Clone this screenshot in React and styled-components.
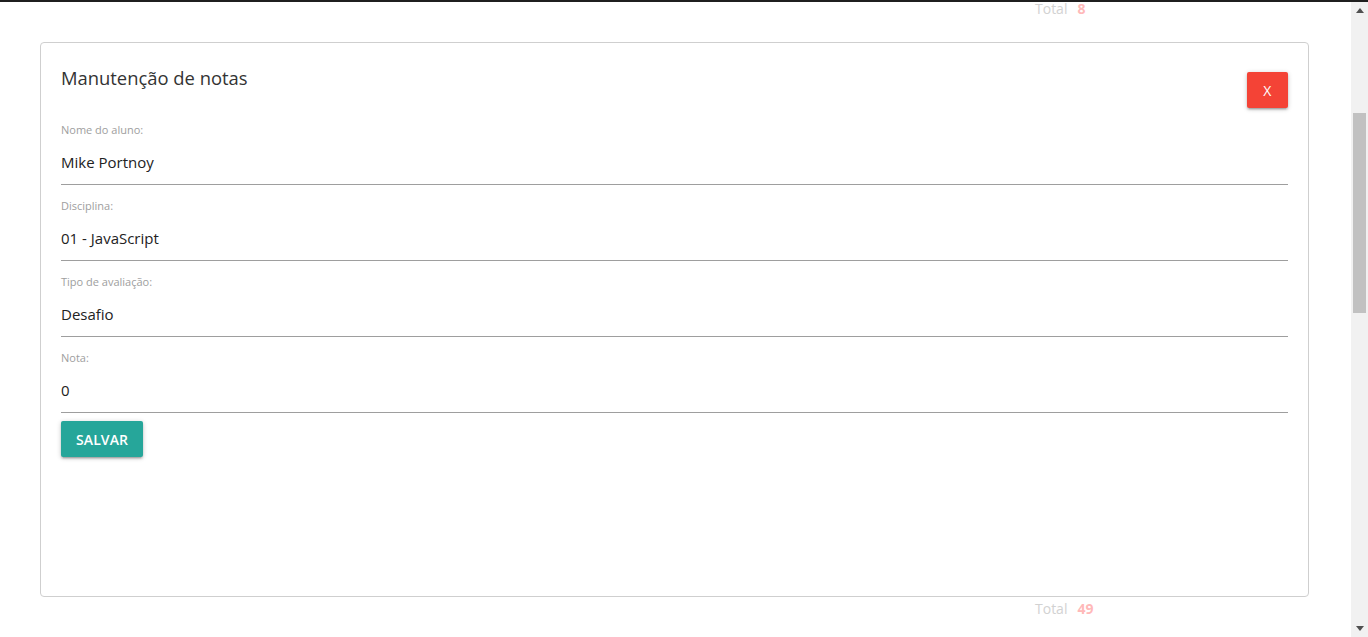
import React from "react"
import styled, { createGlobalStyle } from "styled-components"

const GlobalStyle = createGlobalStyle`
  html, body {
    margin: 0;
    padding: 0;
    background: #fff;
    overflow: hidden;
  }
  body {
    font-family: "Open Sans", "Noto Sans", sans-serif;
  }
`

const Page = styled.div`
  display: flex;
  flex-direction: column;
  width: 1368px;
  height: 637px;
`

const TopBar = styled.div`
  height: 2px;
  background: #1f1f1f;
`

const Body = styled.div`
  display: flex;
  flex: 1;
  min-height: 0;
`

const Main = styled.div`
  flex: 1;
  display: flex;
  flex-direction: column;
  padding: 0 42px 0 40px;
`

const TotalRow = styled.div`
  display: flex;
  gap: 10px;
  padding-left: 995px;
  margin-top: ${(p) => p.$top || 0}px;
  font-size: 14px;
  line-height: 14px;
  height: 14px;
  overflow: visible;
`

const TotalLabel = styled.span`
  color: #d2d2d2;
`

const TotalValue = styled.span`
  color: #ffb9b9;
  font-weight: 700;
`

const Modal = styled.div`
  box-sizing: border-box;
  height: 555px;
  margin-top: 26px;
  border: 1px solid #cfcfcf;
  border-radius: 4px;
  padding: 19px 20px;
  display: flex;
  flex-direction: column;
`

const Header = styled.div`
  display: flex;
  justify-content: space-between;
  align-items: flex-start;
  margin-bottom: 14px;
`

const Title = styled.h4`
  margin: 0;
  font-size: 18.4px;
  line-height: 32px;
  font-weight: 400;
  color: #333;
`

const Button = styled.button`
  border: none;
  border-radius: 2px;
  height: 36px;
  padding: 0 ${(p) => p.$pad}px;
  margin-top: ${(p) => p.$top || 0}px;
  background: ${(p) => p.$color};
  color: #fff;
  font-family: inherit;
  font-size: 14px;
  font-weight: ${(p) => (p.$bold ? 600 : 400)};
  letter-spacing: 0.1px;
  text-transform: uppercase;
  box-shadow: 0 2px 2px 0 rgba(0, 0, 0, 0.14), 0 3px 1px -2px rgba(0, 0, 0, 0.12),
    0 1px 5px 0 rgba(0, 0, 0, 0.2);
  cursor: pointer;
`

const Field = styled.div`
  display: flex;
  flex-direction: column;
  margin-bottom: ${(p) => (p.$last ? 8 : 13)}px;
`

const Label = styled.label`
  font-size: 11px;
  line-height: 16px;
  color: #9e9e9e;
`

const Value = styled.div`
  box-sizing: border-box;
  height: 47px;
  display: flex;
  align-items: center;
  padding-top: 2px;
  border-bottom: 1px solid #9e9e9e;
  font-size: 15px;
  color: #222;
`

const Scrollbar = styled.div`
  width: 17px;
  background: #f1f1f1;
  display: flex;
  flex-direction: column;
`

const Arrow = styled.div`
  height: 17px;
  display: flex;
  align-items: center;
  justify-content: center;
`

const Track = styled.div`
  flex: 1;
  padding: 94px 2px 0;
`

const Thumb = styled.div`
  height: 200px;
  background: #c1c1c1;
`

const fields = [
  { label: "Nome do aluno:", value: "Mike Portnoy" },
  { label: "Disciplina:", value: "01 - JavaScript" },
  { label: "Tipo de avaliação:", value: "Desafio" },
  { label: "Nota:", value: "0" },
]

const App = () => {
  return (
    <Page>
      <GlobalStyle />
      <TopBar />
      <Body>
        <Main>
          <TotalRow>
            <TotalLabel>Total</TotalLabel>
            <TotalValue>8</TotalValue>
          </TotalRow>
          <Modal>
            <Header>
              <Title>Manutenção de notas</Title>
              <Button $color="#f44336" $pad={16.5} $top={10}>
                x
              </Button>
            </Header>
            {fields.map((f, i) => (
              <Field key={f.label} $last={i === fields.length - 1}>
                <Label>{f.label}</Label>
                <Value>{f.value}</Value>
              </Field>
            ))}
            <div>
              <Button $color="#26a69a" $pad={15} $bold>
                Salvar
              </Button>
            </div>
          </Modal>
          <TotalRow $top={5}>
            <TotalLabel>Total</TotalLabel>
            <TotalValue>49</TotalValue>
          </TotalRow>
        </Main>
        <Scrollbar>
          <Arrow>
            <svg width="8" height="5" viewBox="0 0 8 5">
              <path d="M0 5 L4 0 L8 5 Z" fill="#505050" />
            </svg>
          </Arrow>
          <Track>
            <Thumb />
          </Track>
          <Arrow>
            <svg width="8" height="5" viewBox="0 0 8 5">
              <path d="M0 0 L4 5 L8 0 Z" fill="#505050" />
            </svg>
          </Arrow>
        </Scrollbar>
      </Body>
    </Page>
  )
}

export default App
